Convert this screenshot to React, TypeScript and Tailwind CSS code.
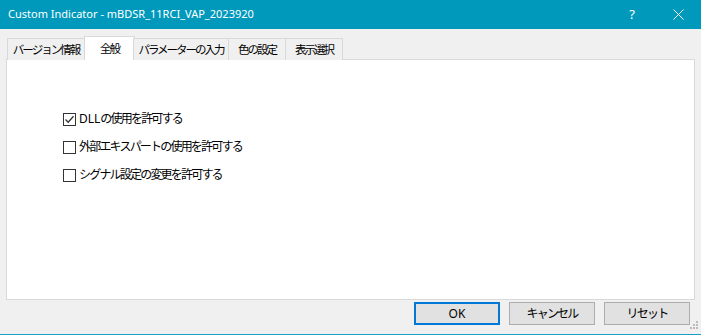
import React, { useState } from 'react';

const tabs = ['バージョン情報', '全般', 'パラメーターの入力', '色の設定', '表示選択'];
const tabWidths = ['w-[78px]', 'w-[51px]', 'w-[96px]', 'w-[58px]', 'w-[58px]'];

const options = [
  { latin: '', label: 'DLLの使用を許可する', checked: true },
  { latin: '', label: '外部エキスパートの使用を許可する', checked: false },
  { latin: '', label: 'シグナル設定の変更を許可する', checked: false },
];

// Meiryo UI is narrower than Noto CJK, so squeeze the Japanese a bit
const jp = 'text-[12px] tracking-[-1.8px] whitespace-nowrap';
const jpTab = 'text-[11.5px] tracking-[-2px] whitespace-nowrap';

// keep ascii runs (e.g. "DLL") at normal spacing
const Label = ({ text }: { text: string }) => (
  <>
    {text.split(/([A-Za-z0-9]+)/).map((part, i) =>
      /^[A-Za-z0-9]+$/.test(part) ? (
        <span key={i} className="tracking-normal">{part}</span>
      ) : (
        <span key={i}>{part}</span>
      )
    )}
  </>
);

const CheckBox = ({ checked, label, onToggle }: { checked: boolean; label: string; onToggle: () => void }) => (
  <label className="flex items-center h-[14px] gap-[3px] cursor-default" onClick={onToggle}>
    <span className="w-[13px] h-[13px] border border-[#333333] bg-white flex items-center justify-center shrink-0">
      {checked && (
        <svg width="11" height="11" viewBox="0 0 11 11">
          <path d="M1.5 5.5 L4.2 8.2 L9.5 2.2" fill="none" stroke="#333333" strokeWidth="1.3" />
        </svg>
      )}
    </span>
    <span className={`${jp} text-black leading-none`}>
      <Label text={label} />
    </span>
  </label>
);

export default function App() {
  const [active, setActive] = useState(1);
  const [checks, setChecks] = useState(options.map(o => o.checked));

  return (
    <div
      className="w-[701px] h-[335px] bg-[#f0f0f0] flex flex-col border-b border-[#1a9fc4] overflow-hidden"
      style={{ fontFamily: '"Noto Sans", "Noto Sans CJK JP", sans-serif' }}
    >
      <div className="h-[29px] bg-[#0099bc] flex items-center justify-between pl-[8px] shrink-0">
        <span className="text-white text-[11px]">Custom Indicator - mBDSR_11RCI_VAP_2023920</span>
        <div className="flex items-center h-full">
          <span className="w-[46px] text-center text-white text-[13px]">?</span>
          <span className="w-[46px] h-full flex items-center justify-center">
            <svg width="11" height="11" viewBox="0 0 11 11">
              <path d="M0.5 0.5 L10.5 10.5 M10.5 0.5 L0.5 10.5" stroke="white" strokeWidth="1" />
            </svg>
          </span>
        </div>
      </div>

      <div className="flex items-end h-[24px] mt-[7px] pl-[8px] shrink-0 relative z-10">
        {tabs.map((t, i) => (
          <div
            key={t}
            onClick={() => setActive(i)}
            className={
              i === active
                ? `${tabWidths[i]} shrink-0 h-[24px] bg-white border border-b-0 border-[#d9d9d9] flex items-center justify-center ${jpTab} text-black -mx-px`
                : `${tabWidths[i]} shrink-0 h-[22px] bg-[#f0f0f0] border border-b-0 border-[#d9d9d9] flex items-center justify-center ${jpTab} text-black -ml-px`
            }
          >
            {t}
          </div>
        ))}
      </div>

      <div className="ml-[6px] mt-[-1px] w-[689px] h-[241px] bg-white border border-[#d9d9d9] shrink-0 pl-[56px] pt-[52px] flex flex-col gap-[14px]">
        {options.map((o, i) => (
          <CheckBox
            key={o.label}
            label={o.label}
            checked={checks[i]}
            onToggle={() => setChecks(c => c.map((v, j) => (j === i ? !v : v)))}
          />
        ))}
      </div>

      <div className="flex justify-end items-start pr-[11px] mt-[2px] gap-[9px] relative">
        <button className="w-[86px] h-[23px] bg-[#e1e1e1] border-2 border-[#0078d7] text-[12px] text-black">OK</button>
        <button className={`w-[86px] h-[23px] bg-[#e1e1e1] border border-[#adadad] ${jp} text-black`}>キャンセル</button>
        <button className={`w-[86px] h-[23px] bg-[#e1e1e1] border border-[#adadad] ${jp} text-black`}>リセット</button>
        <svg className="absolute right-[2px] top-[19px]" width="9" height="9" viewBox="0 0 9 9">
          <rect x="6" y="0" width="2" height="2" fill="#bcbcbc" />
          <rect x="3" y="3" width="2" height="2" fill="#bcbcbc" />
          <rect x="6" y="3" width="2" height="2" fill="#bcbcbc" />
          <rect x="0" y="6" width="2" height="2" fill="#bcbcbc" />
          <rect x="3" y="6" width="2" height="2" fill="#bcbcbc" />
          <rect x="6" y="6" width="2" height="2" fill="#bcbcbc" />
        </svg>
      </div>
    </div>
  );
}
